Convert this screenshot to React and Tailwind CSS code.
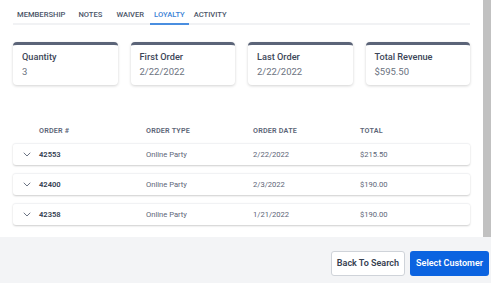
import React from 'react';

const tabs = [
  { name: 'MEMBERSHIP', ml: 'ml-0' },
  { name: 'NOTES', ml: 'ml-[5px]' },
  { name: 'WAIVER', ml: 'ml-[6px]' },
  { name: 'LOYALTY', ml: 'ml-[2px]' },
  { name: 'ACTIVITY', ml: 'ml-[1px]' },
];

const stats = [
  { label: 'Quantity', value: '3' },
  { label: 'First Order', value: '2/22/2022' },
  { label: 'Last Order', value: '2/22/2022' },
  { label: 'Total Revenue', value: '$595.50' },
];

const orders = [
  { id: '42553', type: 'Online Party', date: '2/22/2022', total: '$215.50' },
  { id: '42400', type: 'Online Party', date: '2/3/2022', total: '$190.00' },
  { id: '42358', type: 'Online Party', date: '1/21/2022', total: '$190.00' },
];

const Chevron = () => (
  <svg width="8" height="5" viewBox="0 0 8 5" fill="none">
    <path d="M1 1L4 4L7 1" stroke="#5c6577" strokeWidth="0.9" strokeLinecap="round" strokeLinejoin="round" />
  </svg>
);

const App = () => {
  return (
    <div className="w-[491px] h-[283px] flex flex-col bg-white overflow-hidden" style={{ fontFamily: 'Roboto, "Liberation Sans", sans-serif' }}>
      <div className="flex h-[237px]">
        <div className="flex-1 px-[13px]">
          <div className="flex items-end h-[25px] border-b-2 border-[#f1f2f4]">
            {tabs.map((t) => (
              <div
                key={t.name}
                className={`${t.ml} px-[4px] pb-[3px] text-[7.6px] leading-[10px] font-medium -mb-[2px] border-b-2 ${
                  t.name === 'LOYALTY' ? 'text-[#3b82d6] border-[#4a8ee0]' : 'text-[#4b5568] border-transparent'
                }`}
              >
                {t.name}
              </div>
            ))}
          </div>

          <div className="grid grid-cols-4 gap-[13px] mt-[17px]">
            {stats.map((s) => (
              <div key={s.label} className="h-[43px] rounded-[4px] border-t-[3px] border-[#5b6478] bg-white shadow-[0_1px_3px_rgba(0,0,0,0.18)] px-[9px] pt-[5px]">
                <div className="text-[9.2px] font-medium text-[#3c4658] leading-[13px]">{s.label}</div>
                <div className="text-[9.5px] text-[#6b7280] leading-[13px] mt-[2px]">{s.value}</div>
              </div>
            ))}
          </div>

          <div className="flex mt-[41px] pl-[26px] text-[7.2px] font-semibold text-[#5c6577] tracking-[0.2px]">
            <div className="w-[107px]">ORDER #</div>
            <div className="w-[107px]">ORDER TYPE</div>
            <div className="w-[107px]">ORDER DATE</div>
            <div>TOTAL</div>
          </div>

          <div className="flex flex-col gap-[8px] mt-[6px]">
            {orders.map((o) => (
              <div key={o.id} className="h-[22px] flex items-center rounded-[3px] bg-white shadow-[0_1px_2px_rgba(0,0,0,0.2)] border-t border-[#f1f2f4] text-[7.6px] text-[#5c6577]">
                <div className="w-[26px] flex justify-center pl-[2px]">
                  <Chevron />
                </div>
                <div className="w-[107px] font-semibold text-[#2f3a4d]">{o.id}</div>
                <div className="w-[107px]">{o.type}</div>
                <div className="w-[107px]">{o.date}</div>
                <div>{o.total}</div>
              </div>
            ))}
          </div>
        </div>
        <div className="w-[8px] bg-[#c1c1c1]" />
      </div>

      <div className="flex-1 bg-[#f3f4f6] flex items-start justify-end gap-[5px] pt-[14px] pr-[2px]">
        <button className="h-[25px] px-[5px] rounded-[3px] border border-[#cfd3d9] bg-white text-[9px] font-semibold text-[#374151]">
          Back To Search
        </button>
        <button className="h-[25px] px-[6px] rounded-[3px] bg-[#0b63e0] text-[9px] font-semibold text-white">
          Select Customer
        </button>
      </div>
    </div>
  );
};

export default App;
